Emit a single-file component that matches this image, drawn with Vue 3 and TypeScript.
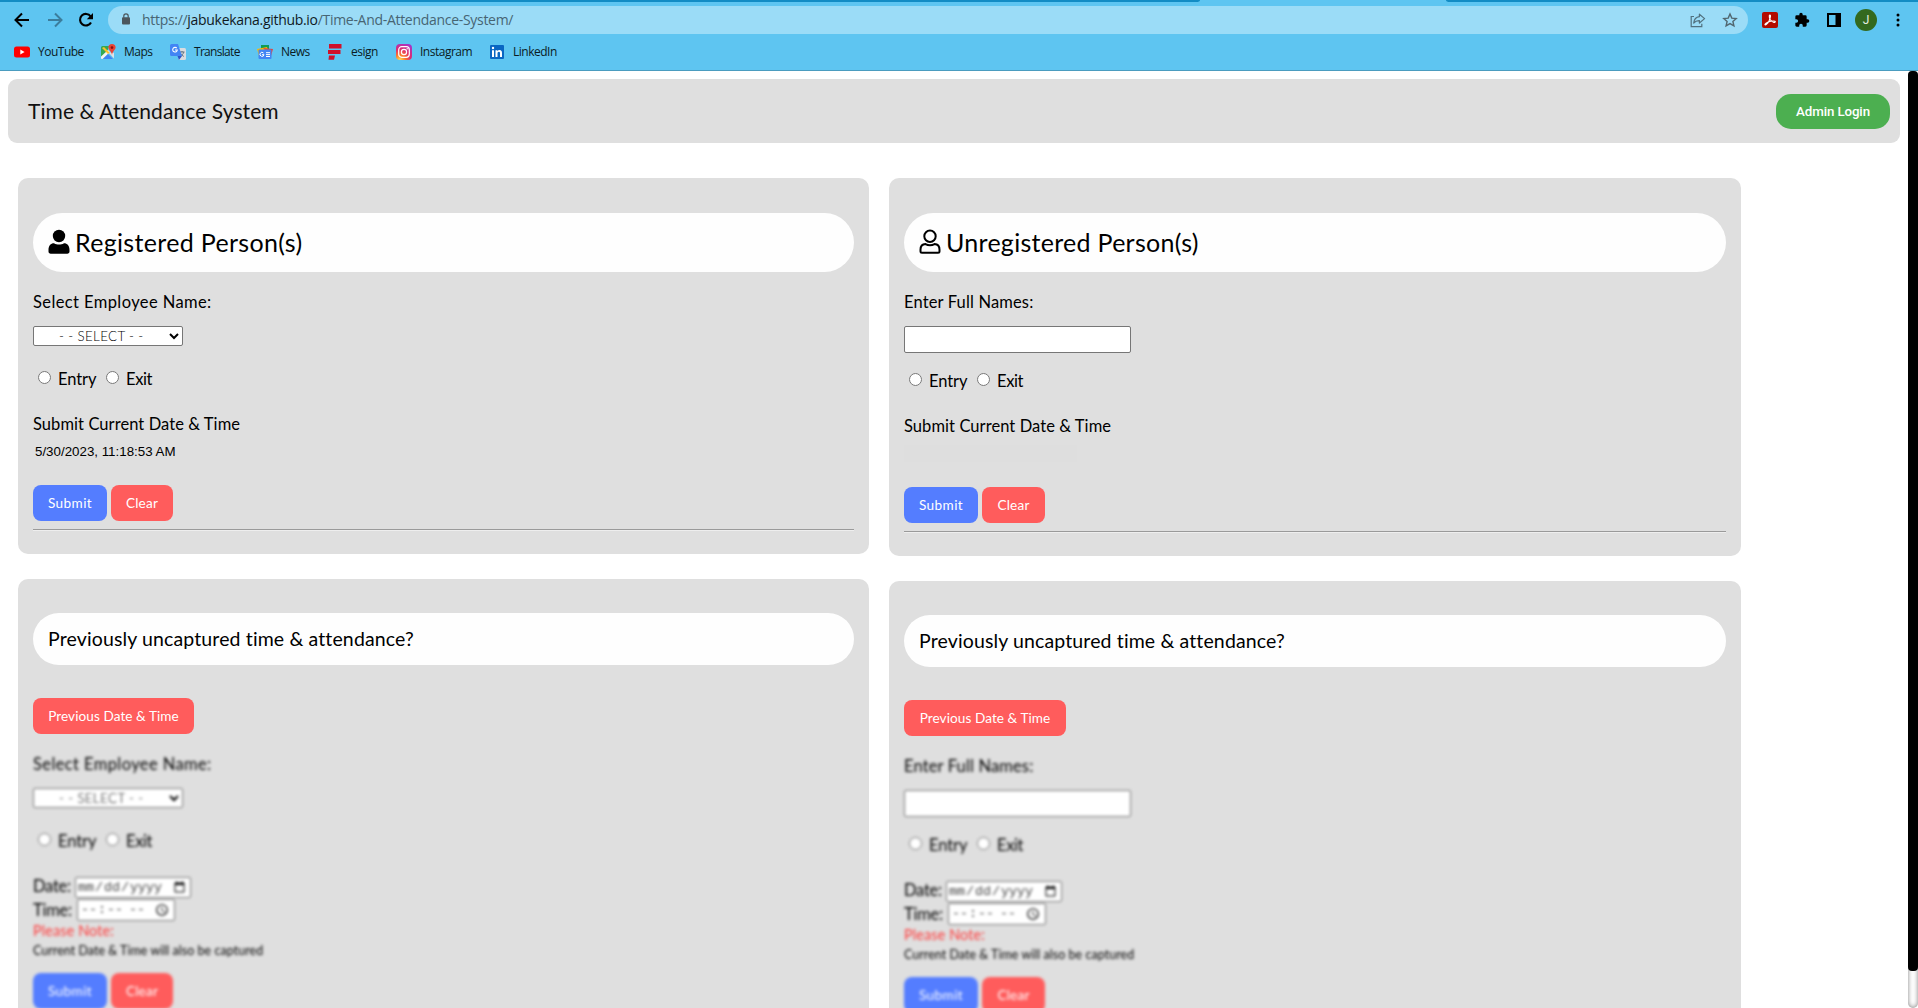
<script setup lang="ts">
interface Panel {
  side: 'left' | 'right'
  title: string
  titleClass: string
  label: string
  stamp: string
}

const panels: Panel[] = [
  { side: 'left', title: 'Registered Person(s)', titleClass: 't-reg', label: 'Select Employee Name:', stamp: '5/30/2023, 11:18:53 AM' },
  { side: 'right', title: 'Unregistered Person(s)', titleClass: 't-unreg', label: 'Enter Full Names:', stamp: '' },
]
</script>

<template>
  <div class="window">
    <div class="chrome">
      <div class="tabs"><i class="tab-edge before"></i><i class="tab-edge after"></i></div>
      <div class="toolbar">
        <svg class="back" width="16" height="16" viewBox="0 0 16 16" fill="none" stroke="#000" stroke-width="2"><path d="M15 8H2M8 1.5 1.5 8 8 14.5" /></svg>
        <svg class="forward" width="16" height="16" viewBox="0 0 16 16" fill="none" stroke="#3b7d9c" stroke-width="2"><path d="M1 8h13M8 1.5 14.5 8 8 14.5" /></svg>
        <svg class="reload" width="16" height="16" viewBox="0 0 16 16"><path d="M13 10.4A5.8 5.8 0 1 1 12.6 4.4" fill="none" stroke="#000" stroke-width="2.1" /><path d="M15 1v6.2H8.8z" /></svg>
        <div class="omnibox">
          <svg class="lock" width="10" height="12" viewBox="0 0 10 12"><rect x="1" y="4.3" width="8" height="7.2" rx="1" fill="#4c565c" /><path d="M2.8 4.8V3a2.2 2.2 0 0 1 4.4 0v1.8" fill="none" stroke="#4c565c" stroke-width="1.2" /></svg>
          <span class="url">https://<b>jabukekana.github.io</b>/Time-And-Attendance-System/</span>
          <svg class="share" width="16" height="15" viewBox="0 0 16 15" fill="none" stroke="#51717f" stroke-width="1.2"><path d="M4 3.5H1.2v10.2h10.6v-3" /><path d="M9.4 1.2 14.6 5.6 9.4 10V7.6C6.8 7.5 5 8.4 3.7 10 4.1 6.6 6 4.2 9.4 3.7z" stroke-linejoin="round" /></svg>
          <svg class="star" width="16" height="16" viewBox="0 0 16 16" fill="none" stroke="#51666f" stroke-width="1.4"><path d="m8 2 1.8 4.1 4.4.4-3.3 3 1 4.4L8 11.6l-3.9 2.3 1-4.4-3.3-3 4.4-.4z" /></svg>
        </div>
        <svg class="pdf" width="16" height="16" viewBox="0 0 16 16"><rect width="16" height="16" rx="2" fill="#b30b00" /><path d="M3 12.3c.8-1.600 5-3.300 8.300-3.300 3.200 0 2 2 .2 1.300C9 9.200 7.200 6.500 7.300 4c.1-1.600 1.500-1.300 1.200.3C8 7.500 6 11 4.400 12.400c-.8.7-1.700.5-1.400-.1z" fill="none" stroke="#fff" stroke-width="1.100" /></svg>
        <svg class="puzzle" width="16" height="16" viewBox="0 0 24 24"><path d="M20.500 11H19V7a2 2 0 0 0-2-2h-4V3.500a2.500 2.500 0 0 0-5 0V5H4a2 2 0 0 0-2 2v3.800h1.500a2.700 2.700 0 0 1 0 5.400H2V20c0 1.100.9 2 2 2h3.800v-1.500a2.700 2.700 0 0 1 5.400 0V22H17a2 2 0 0 0 2-2v-4h1.500a2.500 2.500 0 0 0 0-5z" /></svg>
        <svg class="side" width="14" height="14" viewBox="0 0 14 14"><path d="M0 0h14v14H0zM2 2v10h6.500V2z" fill-rule="evenodd" /></svg>
        <span class="avatar">J</span>
        <svg class="dots" width="4" height="14" viewBox="0 0 4 14"><circle cx="2" cy="2" r="1.500" /><circle cx="2" cy="7" r="1.500" /><circle cx="2" cy="12" r="1.500" /></svg>
      </div>
      <div class="bookmarks">
        <span class="bm youtube"><svg width="16" height="16" viewBox="0 0 16 16"><rect y="2.500" width="16" height="11" rx="2.500" fill="#f00" /><path d="m6.300 5.500 4.300 2.500-4.300 2.500z" fill="#fff" /></svg><em>YouTube</em></span>
        <span class="bm maps"><svg width="16" height="16" viewBox="0 0 16 16"><path d="M1 3.500A1.500 1.500 0 0 1 2.500 2H9L7 8l-6 6z" fill="#34a853" /><path d="M1 12.500 8 6l2 2-7.500 7H2a1 1 0 0 1-1-1z" fill="#f4f4f4" /><path d="m3 15 5-5 5 5z" fill="#4285f4" /><path d="m9 9 5 5.500V9l-2-1z" fill="#dfe3e8" /><path d="m2 4 6 6 1.500-1.500L4 3z" fill="#fbc02d" /><path d="M12 0a3.600 3.600 0 0 1 3.600 3.600C15.600 6 12.600 7 12 11c-.6-4-3.600-5-3.600-7.400A3.600 3.600 0 0 1 12 0z" fill="#ea4335" /><circle cx="12" cy="3.600" r="1.300" fill="#811" /></svg><em>Maps</em></span>
        <span class="bm translate"><svg width="16" height="16" viewBox="0 0 16 16"><path d="M6 4h8.500A1.500 1.500 0 0 1 16 5.500v9a1.500 1.500 0 0 1-1.500 1.500H9z" fill="#dadce0" /><path d="M9.800 8h4.700M12 7v1M13.700 8.200c-.5 2-1.700 3-3.400 4M10.800 9.500c.8 1.500 1.500 2 3 2.900" stroke="#5f6f7c" fill="none" /><path d="M1.500 0H8l4 12H1.500A1.500 1.500 0 0 1 0 10.500v-9A1.500 1.500 0 0 1 1.500 0z" fill="#4285f4" /><path d="m7.500 12 4.500 0-3 4z" fill="#2d55c8" /><path d="M6.800 4.200A2.300 2.300 0 1 0 7.300 6H5" fill="none" stroke="#fff" stroke-width="1.100" /></svg><em>Translate</em></span>
        <span class="bm news"><svg width="16" height="16" viewBox="0 0 16 16"><path d="M4 1h8v7H4z" fill="#0f9d58" /><path d="m0 5 10-2 2 6-10 3z" fill="#fbbc04" /><path d="m6 4 10 1-2 7z" fill="#ea4335" /><rect x="1.500" y="5.500" width="13" height="9.500" rx="1" fill="#4285f4" /><path d="M6.500 9A2 2 0 1 0 7 10.700H5M9 8.700h4M9 10.600h4M9 12.500h4" stroke="#fff" fill="none" /></svg><em>News</em></span>
        <span class="bm esign"><svg width="14" height="16" viewBox="0 0 14 16" fill="#d0102a"><path d="M1 0h12.500v4.500H1zM0 6h12.500v4H0zM1 11.500h6L6 15.700H.5z" /></svg><em>esign</em></span>
        <span class="bm instagram"><svg width="16" height="16" viewBox="0 0 16 16"><defs><radialGradient id="ig" cx=".25" cy="1" r="1.100"><stop offset="0" stop-color="#fd5" /><stop offset=".3" stop-color="#fb7a2c" /><stop offset=".6" stop-color="#e02c6d" /><stop offset="1" stop-color="#a534c8" /></radialGradient></defs><rect width="16" height="16" rx="4" fill="url(#ig)" /><rect x="2.700" y="2.700" width="10.600" height="10.600" rx="3" fill="none" stroke="#fff" stroke-width="1.200" /><circle cx="8" cy="8" r="2.600" fill="none" stroke="#fff" stroke-width="1.200" /><circle cx="11.200" cy="4.800" r=".7" fill="#fff" /></svg><em>Instagram</em></span>
        <span class="bm linkedin"><svg width="14" height="14" viewBox="0 0 14 14"><rect width="14" height="14" rx="1" fill="#0a66c2" /><path d="M2 5.300h2V12H2zM5.500 5.300h1.900v.9c.4-.7 1.100-1.100 2.100-1.100 2 0 2.500 1.300 2.500 3.100V12h-2V8.500c0-.9-.1-1.700-1.100-1.700S7.500 7.600 7.500 8.500V12h-2z" fill="#fff" /><circle cx="3" cy="3" r="1.200" fill="#fff" /></svg><em>LinkedIn</em></span>
      </div>
    </div>

    <div class="viewport">
      <main class="page">
        <header class="header">
          <h1>Time &amp; Attendance System</h1>
          <button class="login">Admin Login</button>
        </header>

        <div class="columns">
          <div v-for="p in panels" :key="p.side" class="column" :class="p.side">
            <section class="card current">
              <div class="pill">
                <svg v-if="p.side === 'left'" class="user" width="22" height="26" viewBox="0 0 22 26"><circle cx="11" cy="7" r="6.200" /><path d="M.5 21c0-4.200 2.200-6.800 5.500-6.800 1.700 1 3.200 1.400 5 1.400s3.300-.4 5-1.400c3.300 0 5.500 2.600 5.500 6.800v1.500c0 1.300-.9 2.200-2.200 2.200H2.700c-1.300 0-2.200-.9-2.200-2.200z" /></svg>
                <svg v-else class="user" width="22" height="26" viewBox="0 0 22 26" fill="none" stroke="#000" stroke-width="2"><circle cx="11" cy="7.200" r="5.700" /><path d="M1.500 20.700c0-3.200 1.900-5.400 5-5.600 1.600.9 2.900 1.200 4.500 1.200s2.900-.3 4.500-1.200c3.100.2 5 2.400 5 5.600v1.500c0 .9-.6 1.500-1.500 1.500H3c-.9 0-1.500-.6-1.500-1.500z" /></svg>
                <h2 :class="p.titleClass">{{ p.title }}</h2>
              </div>
              <label class="caption">{{ p.label }}</label>
              <select v-if="p.side === 'left'" class="picker"><option>- - SELECT - -</option></select>
              <input v-else class="names" type="text" />
              <div class="choice"><input type="radio" :name="p.side" /><span class="entry">Entry</span><input type="radio" :name="p.side" /><span class="exit">Exit</span></div>
              <div class="now">Submit Current Date &amp; Time</div>
              <div class="stamp">{{ p.stamp }}</div>
              <div class="actions"><button class="btn submit">Submit</button><button class="btn clear">Clear</button></div>
              <hr />
            </section>

            <section class="card previous">
              <div class="pill small"><h3>Previously uncaptured time &amp; attendance?</h3></div>
              <button class="btn toggle">Previous Date &amp; Time</button>
              <div class="locked">
                <label class="caption">{{ p.label }}</label>
                <select v-if="p.side === 'left'" class="picker"><option>- - SELECT - -</option></select>
                <input v-else class="names" type="text" />
                <div class="choice"><input type="radio" :name="p.side + 'prev'" /><span class="entry">Entry</span><input type="radio" :name="p.side + 'prev'" /><span class="exit">Exit</span></div>
                <div class="when date"><span>Date:</span><input type="date" /></div>
                <div class="when time"><span>Time:</span><input type="time" /></div>
                <div class="note">Please Note:</div>
                <div class="hint">Current Date &amp; Time will also be captured</div>
                <div class="actions"><button class="btn submit">Submit</button><button class="btn clear">Clear</button></div>
              </div>
            </section>
          </div>
        </div>
      </main>
      <div class="scrollbar"><div class="thumb"></div></div>
    </div>
  </div>
</template>

<style>
html, body { margin: 0; overflow: hidden; background: #fff; }
</style>

<style scoped>
* { box-sizing: border-box; }
.window { width: 1918px; height: 1008px; overflow: hidden; display: flex; flex-direction: column; font-family: Lato, sans-serif; color: #000; background: #fff; }

.chrome { flex: none; height: 71px; background: #5ec5f1; border-bottom: 1px solid #4b9cbf; font-family: "Open Sans", sans-serif; }
.tabs { height: 6px; display: flex; justify-content: space-between; }
.tab-edge { height: 2px; background: #138cc4; }
.before { width: 1200px; border-bottom-right-radius: 4px 2px; }
.after { width: 472px; border-bottom-left-radius: 4px 2px; }
.toolbar { height: 28px; display: flex; align-items: center; }
.toolbar svg { flex: none; }
.back { margin-left: 14px; }
.forward { margin-left: 17px; }
.reload { margin-left: 15px; }
.omnibox { margin-left: 14px; width: 1640px; height: 28px; border-radius: 14px; background: #9bdcf7; display: flex; align-items: center; }
.lock { margin: 0 0 2px 13px; }
.url { margin-left: 11px; font-size: 14px; letter-spacing: -0.3px; line-height: 26px; color: #476573; white-space: nowrap; }
.url b { font-weight: 400; color: #10191e; }
.share { margin-left: auto; }
.star { margin: 0 10px 0 16px; }
.pdf { margin-left: 14px; }
.puzzle { margin-left: 16px; }
.side { margin-left: 17px; }
.avatar { margin-left: 14px; width: 22px; height: 22px; border-radius: 50%; background: #33691e; color: #e6eee2; font: 12px/22px Roboto, sans-serif; text-align: center; }
.dots { margin-left: 19px; }
.bookmarks { height: 36px; display: flex; align-items: center; padding-left: 14px; }
.bm { display: flex; align-items: center; flex: none; height: 16px; }
.bm em { font-style: normal; font-size: 12px; line-height: 16px; letter-spacing: -0.5px; color: #0b1b24; white-space: nowrap; }
.bm svg { flex: none; }
.youtube { width: 86px; } .youtube em { margin-left: 8px; }
.maps { width: 70px; } .maps em { margin-left: 8px; }
.translate { width: 87px; } .translate em { margin-left: 8px; letter-spacing: -0.7px; }
.news { width: 71px; } .news em { margin-left: 8px; }
.esign { width: 68px; } .esign em { margin-left: 9px; }
.instagram { width: 94px; } .instagram em { margin-left: 8px; }
.linkedin em { margin-left: 9px; }

.viewport { height: 937px; display: flex; }
.page { width: 1908px; height: 937px; overflow: hidden; }
.header { margin: 8px 8px 0; height: 64px; width: 1892px; border-radius: 9px; background: #dfdfdf; display: flex; align-items: center; justify-content: space-between; padding: 0 10px 0 20px; }
h1 { margin: 0 0 2px; font-size: 21px; font-weight: 400; letter-spacing: 0.08px; color: #111; }
.login { width: 114px; height: 35px; border: 0; border-radius: 15px; padding: 0; background: #4caf50; color: #fff; font: 500 13.33px Roboto, sans-serif; letter-spacing: -0.12px; }

.columns { display: flex; align-items: flex-start; gap: 20px; margin: 35px 0 0 18px; }
.column { width: 852px; display: flex; flex-direction: column; gap: 25px; }
.column.left { width: 851px; }
.card { background: #dfdfdf; border-radius: 10px; padding: 0 15px; display: flex; flex-direction: column; align-items: flex-start; }
.current { padding-top: 35px; padding-bottom: 23px; }
.previous { padding-top: 34px; height: 520px; }
.pill { width: 100%; height: 59px; border-radius: 30px; background: #fefefe; display: flex; align-items: center; padding-left: 15px; }
.pill.small { height: 52px; border-radius: 26px; }
.user { margin: 0 5px 1px 0; }
h2, h3 { margin: 0 0 2px; font-weight: 400; white-space: nowrap; }
h2 { font-size: 25px; }
.t-reg { letter-spacing: 0.33px; }
.t-unreg { letter-spacing: 0.28px; }
h3 { margin-bottom: 1px; font-size: 19.5px; letter-spacing: 0.13px; }

.caption, .now, .choice span, .when span { font-size: 16.5px; line-height: 22px; height: 20px; white-space: nowrap; }
.caption { margin-top: 19px; letter-spacing: 0.4px; }
.right .caption { letter-spacing: 0.15px; }
.picker { margin: 15px 0 0; width: 150px; height: 20px; padding: 0 0 1px 21px; border: 1px solid #767676; border-radius: 2px; background-color: #fff; color: #000; font: 300 13.33px/16px Lato, sans-serif; letter-spacing: 0.35px; }
.names { margin: 15px 0 0; width: 227px; height: 27px; border: 1px solid #767676; border-radius: 2px; background: #fff; }
.choice { margin-top: 22px; height: 20px; display: flex; align-items: center; }
.right .choice { margin-top: 17px; }
.choice input { width: 13px; height: 13px; margin: 0 7px 1px 5px; }
.entry { width: 43px; letter-spacing: -0.1px; }
.choice .exit { letter-spacing: -0.4px; }
.now { margin-top: 25px; letter-spacing: 0.07px; }
.stamp { margin-top: 10px; height: 17px; width: 173px; padding-left: 2px; font: 13.33px/17px "Liberation Sans", sans-serif; white-space: nowrap; }
.right .stamp { background: #dedede; }
.actions { margin-top: 25px; height: 36px; display: flex; gap: 4px; }
.btn { height: 36px; border: 0; border-radius: 8px; padding: 0; color: #fff; font: 400 13.6px Lato, sans-serif; white-space: nowrap; }
.submit { width: 74px; background: #547dff; letter-spacing: 0.4px; }
.clear { width: 62px; background: #ff5c5c; letter-spacing: 0.2px; }
.right .clear { width: 63px; }
hr { width: 100%; height: 2px; margin: 8px 0 0; border: 0; border-top: 1px solid #9a9a9a; background: #eee; }

.toggle { margin-top: 33px; width: 161px; background: #ff5c5c; letter-spacing: 0.07px; }
.right .toggle { width: 162px; }
.locked { display: flex; flex-direction: column; align-items: flex-start; filter: blur(1.4px); }
.when { display: flex; align-items: flex-start; height: 22px; }
.when input { border: 1px solid #767676; border-radius: 2px; background: #fff; padding: 0 2px; font: 13.33px "Liberation Mono", monospace; color: #444; }
.date { margin-top: 25px; }
.when span { letter-spacing: -0.25px; }
.date span { width: 42px; }
.date input { width: 116px; height: 21px; margin: 2px 0 0; padding-left: 1px; }
.time { margin-top: 2px; }
.time span { width: 44px; }
.time input { width: 98px; height: 22px; margin: 0; }
.note { margin-top: 1px; font-size: 14.4px; line-height: 18px; height: 17px; letter-spacing: 0.13px; color: #ff3b3b; }
.hint { margin-top: 3px; font-size: 12.4px; line-height: 17px; height: 16px; letter-spacing: 0.08px; }
.locked .actions { margin-top: 15px; }

.scrollbar { width: 10px; height: 937px; border-radius: 5px; background: #fff; box-shadow: inset 0 0 5px #808080; }
.thumb { height: 900px; border-radius: 4px; background: #000; }
</style>
